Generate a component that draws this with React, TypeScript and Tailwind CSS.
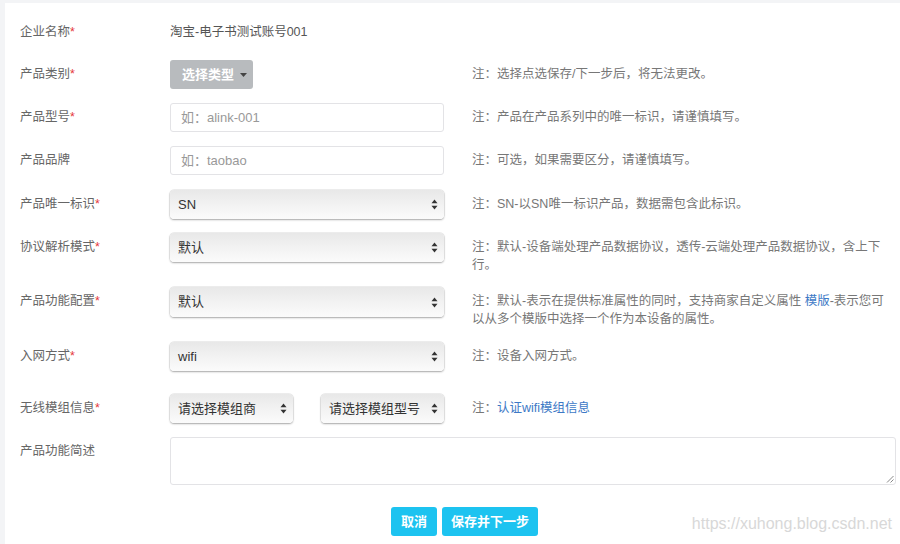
import React from "react";

const font = { fontFamily: '"Liberation Sans", "Noto Sans CJK SC", sans-serif' };

function Star() {
  return <span className="text-[#e5383b]">*</span>;
}

function Arrows() {
  return (
    <svg width="7" height="11" viewBox="0 0 7 11" className="shrink-0">
      <path d="M3.5 0.5 L6.5 4.2 L0.5 4.2 Z" fill="#333" />
      <path d="M3.5 10.5 L6.5 6.8 L0.5 6.8 Z" fill="#333" />
    </svg>
  );
}

function FakeSelect({ value, w, h = "h-[29px]" }: { value: string; w: string; h?: string }) {
  return (
    <div
      className={`${w} ${h} shrink-0 flex items-center justify-between pl-[8px] pr-[6px] rounded-[4px] bg-gradient-to-b from-[#e8e8e8] via-[#f2f2f2] to-[#fbfbfb] shadow-[0_0_0_0.5px_rgba(0,0,0,0.12),0_1px_2px_rgba(0,0,0,0.3)] text-[13px] text-[#333]`}
    >
      <span>{value}</span>
      <Arrows />
    </div>
  );
}

function Label({ text, req }: { text: string; req?: boolean }) {
  return (
    <div className="w-[165px] shrink-0 pl-[15px] leading-[29px] text-[12.5px] text-[#666]">
      {text}
      {req && <Star />}
    </div>
  );
}

function Note({ children }: { children: React.ReactNode }) {
  return (
    <div className="ml-[28px] pt-[5px] leading-[18px] text-[12.5px] text-[#777] whitespace-nowrap">
      {children}
    </div>
  );
}

export default function App() {
  return (
    <div className="w-[900px] h-[544px] bg-[#f3f4f6] pl-[5px] pt-[3px] overflow-hidden" style={font}>
      <div className="relative w-[895px] h-[541px] bg-white flex flex-col">
        {/* 企业名称 */}
        <div className="flex items-start mt-[15px]">
          <Label text="企业名称" req />
          <div className="leading-[29px] text-[12.5px] text-[#555]">淘宝-电子书测试账号001</div>
        </div>

        {/* 产品类别 */}
        <div className="flex items-start mt-[13px]">
          <Label text="产品类别" req />
          <div className="w-[274px] shrink-0">
            <div className="w-[83px] h-[29px] rounded-[3px] bg-[#b8bbbe] flex items-center pl-[12px] gap-[6px] text-[13px] text-white font-bold">
              <span>选择类型</span>
              <svg width="7" height="4" viewBox="0 0 7 4">
                <path d="M0 0 L7 0 L3.5 4 Z" fill="#444" />
              </svg>
            </div>
          </div>
          <Note>注：选择点选保存/下一步后，将无法更改。</Note>
        </div>

        {/* 产品型号 */}
        <div className="flex items-start mt-[14px]">
          <Label text="产品型号" req />
          <div className="w-[274px] h-[29px] shrink-0 border border-[#e3e3e6] rounded-[3px] flex items-center pl-[10px] text-[13px] text-[#999]">
            如：alink-001
          </div>
          <Note>注：产品在产品系列中的唯一标识，请谨慎填写。</Note>
        </div>

        {/* 产品品牌 */}
        <div className="flex items-start mt-[14px]">
          <Label text="产品品牌" />
          <div className="w-[274px] h-[29px] shrink-0 border border-[#e3e3e6] rounded-[3px] flex items-center pl-[10px] text-[13px] text-[#999]">
            如：taobao
          </div>
          <Note>注：可选，如果需要区分，请谨慎填写。</Note>
        </div>

        {/* 产品唯一标识 */}
        <div className="flex items-start mt-[15px]">
          <Label text="产品唯一标识" req />
          <FakeSelect value="SN" w="w-[274px]" />
          <Note>注：SN-以SN唯一标识产品，数据需包含此标识。</Note>
        </div>

        {/* 协议解析模式 */}
        <div className="flex items-start mt-[14px]">
          <Label text="协议解析模式" req />
          <FakeSelect value="默认" w="w-[274px]" />
          <Note>
            注：默认-设备端处理产品数据协议，透传-云端处理产品数据协议，含上下
            <br />
            行。
          </Note>
        </div>

        {/* 产品功能配置 */}
        <div className="flex items-start mt-[13px]">
          <Label text="产品功能配置" req />
          <FakeSelect value="默认" w="w-[274px]" h="h-[30px]" />
          <Note>
            注：默认-表示在提供标准属性的同时，支持商家自定义属性{" "}
            <span className="text-[#3d79c6]">模版</span>-表示您可
            <br />
            以从多个模版中选择一个作为本设备的属性。
          </Note>
        </div>

        {/* 入网方式 */}
        <div className="flex items-start mt-[14px]">
          <Label text="入网方式" req />
          <FakeSelect value="wifi" w="w-[274px]" />
          <Note>注：设备入网方式。</Note>
        </div>

        {/* 无线模组信息 */}
        <div className="flex items-start mt-[23px]">
          <Label text="无线模组信息" req />
          <div className="w-[274px] shrink-0 flex justify-between">
            <FakeSelect value="请选择模组商" w="w-[123px]" />
            <FakeSelect value="请选择模组型号" w="w-[123px]" />
          </div>
          <Note>
            注：<span className="text-[#3d79c6]">认证wifi模组信息</span>
          </Note>
        </div>

        {/* 产品功能简述 */}
        <div className="flex items-start mt-[14px]">
          <Label text="产品功能简述" />
          <div className="relative w-[726px] h-[48px] border border-[#e3e3e6] rounded-[3px]">
            <svg width="8" height="8" viewBox="0 0 8 8" className="absolute right-[1px] bottom-[1px]">
              <path d="M7.5 1 L1 7.5 M7.5 4.5 L4.5 7.5" stroke="#888" strokeWidth="1" />
            </svg>
          </div>
        </div>

        {/* buttons */}
        <div className="flex items-center gap-[5px] mt-[22px] pl-[386px]">
          <div className="w-[46px] h-[29px] rounded-[3px] bg-[#1dc3f0] text-white font-bold text-[13px] flex items-center justify-center">
            取消
          </div>
          <div className="w-[96px] h-[29px] rounded-[3px] bg-[#1dc3f0] text-white font-bold text-[13px] flex items-center justify-center">
            保存并下一步
          </div>
        </div>

        <div className="absolute right-[8px] bottom-[8px] text-[16px] text-[#d8d8d8]">
          https://xuhong.blog.csdn.net
        </div>
      </div>
    </div>
  );
}
